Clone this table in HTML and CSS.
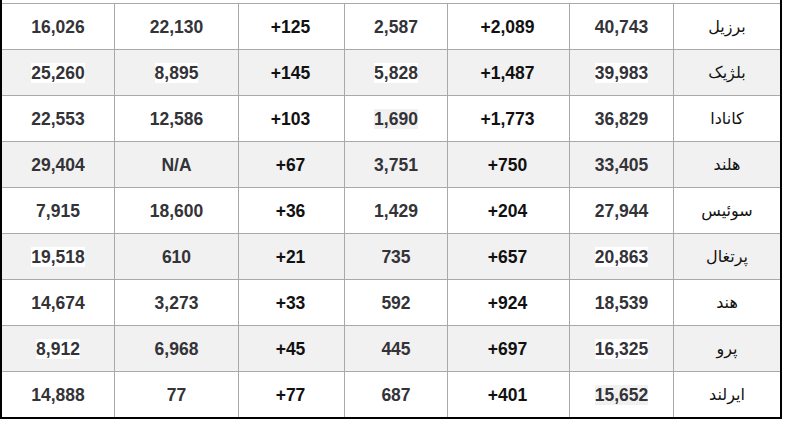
FILE: index.html
```html
<!DOCTYPE html>
<html lang="fa">
<head>
<meta charset="utf-8">
<link rel="stylesheet" href="styles.css">
</head>
<body>
<div class="wrap">
<table class="stats" dir="rtl">
<colgroup>
<col class="c7"><col class="c6"><col class="c5"><col class="c4"><col class="c3"><col class="c2"><col class="c1">
</colgroup>
<tbody>
<tr><td class="name">برزیل</td><td>40,743</td><td class="plus">+2,089</td><td>2,587</td><td class="plus">+125</td><td>22,130</td><td>16,026</td></tr>
<tr><td class="name">بلژیک</td><td><span class="hw">39,983</span></td><td class="plus">+1,487</td><td><span class="hw">5,828</span></td><td class="plus">+145</td><td><span class="hw">8,895</span></td><td><span class="hw">25,260</span></td></tr>
<tr><td class="name">کانادا</td><td>36,829</td><td class="plus">+1,773</td><td><span class="hg">1,690</span></td><td class="plus">+103</td><td>12,586</td><td>22,553</td></tr>
<tr><td class="name">هلند</td><td>33,405</td><td class="plus">+750</td><td>3,751</td><td class="plus">+67</td><td>N/A</td><td>29,404</td></tr>
<tr><td class="name">سوئیس</td><td>27,944</td><td class="plus">+204</td><td>1,429</td><td class="plus">+36</td><td>18,600</td><td>7,915</td></tr>
<tr><td class="name">پرتغال</td><td><span class="hw">20,863</span></td><td class="plus">+657</td><td>735</td><td class="plus">+21</td><td>610</td><td><span class="hw">19,518</span></td></tr>
<tr><td class="name">هند</td><td>18,539</td><td class="plus">+924</td><td>592</td><td class="plus">+33</td><td>3,273</td><td>14,674</td></tr>
<tr><td class="name">پرو</td><td><span class="hw">16,325</span></td><td class="plus">+697</td><td>445</td><td class="plus">+45</td><td>6,968</td><td><span class="hw">8,912</span></td></tr>
<tr><td class="name">ایرلند</td><td><span class="hg">15,652</span></td><td class="plus">+401</td><td>687</td><td class="plus">+77</td><td>77</td><td>14,888</td></tr>
</tbody>
</table>
</div>
</body>
</html>
```

FILE: styles.css
```css
html, body {
  margin: 0;
  padding: 0;
  background: #ffffff;
}

.wrap {
  width: 782px;
  box-sizing: border-box;
  border-left: 2px solid #000;
  border-right: 2px solid #000;
  border-bottom: 2px solid #000;
  padding-top: 3px;
}

.stats {
  width: 778px;
  border-collapse: separate;
  border-spacing: 0;
  table-layout: fixed;
  font-family: "Liberation Sans", Arial, sans-serif;
}

.c1 { width: 112px; }
.c2 { width: 124px; }
.c3 { width: 106px; }
.c4 { width: 103px; }
.c5 { width: 122px; }
.c6 { width: 104px; }
.c7 { width: 107px; }

.stats td {
  height: 46px;
  padding: 1px 0 0;
  box-sizing: border-box;
  border-top: 1px solid #a9a9a9;
  border-left: 1px solid #a9a9a9;
  text-align: center;
  vertical-align: middle;
  font-size: 17.5px;
  font-weight: bold;
  color: #333338;
}

.stats td:last-child {
  border-left: none;
}

.stats tr:nth-child(even) td {
  background: #f1f1f1;
}

.stats td.plus {
  color: #111;
  direction: ltr;
  unicode-bidi: isolate;
}

.stats td.name {
  font-family: "DejaVu Sans", sans-serif;
  font-weight: normal;
  font-size: 16px;
  color: #111;
  padding-top: 0;
}

.hw {
  background: #ffffff;
}

.hg {
  background: #f1f1f1;
}
```
